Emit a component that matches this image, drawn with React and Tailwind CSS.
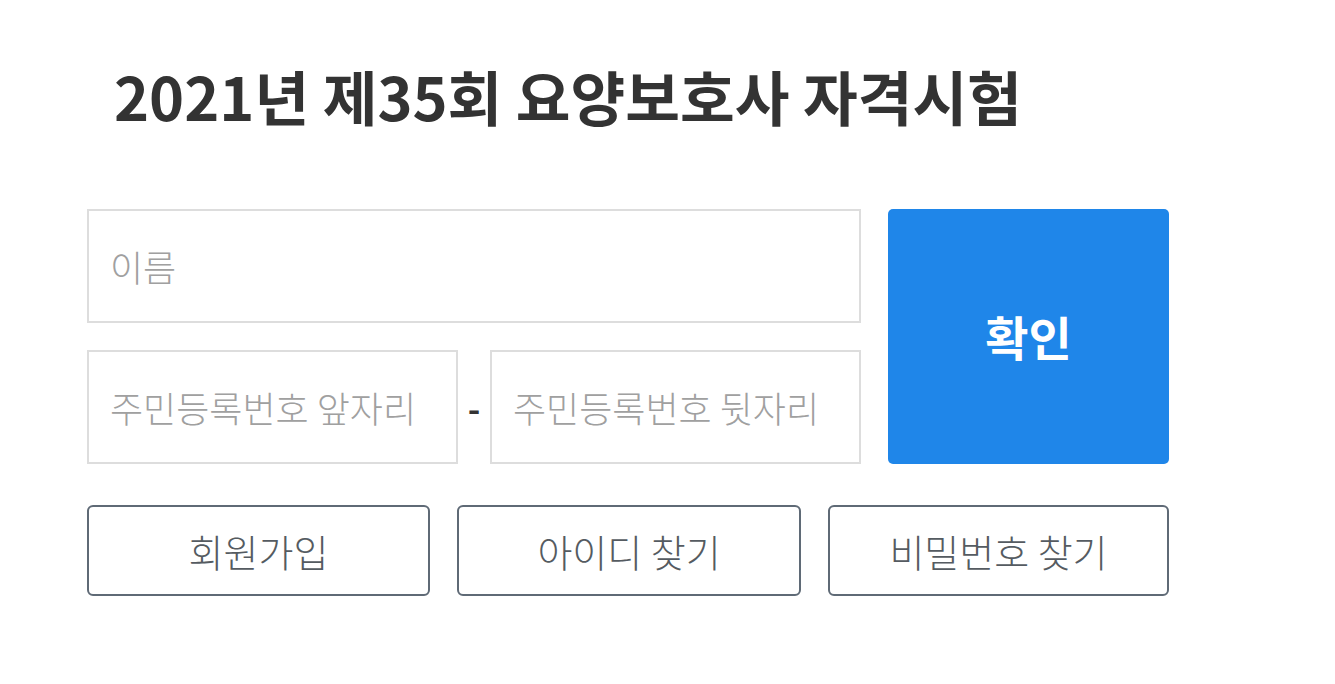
export default function App() {
  const font = { fontFamily: '"Noto Sans CJK KR", "Noto Sans", sans-serif' };

  return (
    <main className="min-h-screen bg-white" style={font}>
      <div className="pl-[87px] pt-[55px] w-[1169px]">
        <h1 className="pl-[27px] text-[59.5px] leading-[80px] font-bold text-[#333333]">
          2021년 제35회 요양보호사 자격시험
        </h1>

        <div className="mt-[74px] flex gap-[27px]">
          <div className="flex flex-col gap-[27px] w-[774px]">
            <input
              type="text"
              placeholder="이름"
              className="h-[114px] w-full border-2 border-[#dddddd] px-[21px] text-[36px] font-light text-[#333] placeholder:text-[#a0a0a0] outline-none"
            />
            <div className="flex items-center">
              <input
                type="text"
                placeholder="주민등록번호 앞자리"
                className="h-[114px] w-[371px] border-2 border-[#dddddd] px-[21px] text-[36px] font-light text-[#333] placeholder:text-[#a0a0a0] outline-none"
              />
              <span className="flex-1 text-center text-[34px] font-bold text-[#333]">-</span>
              <input
                type="text"
                placeholder="주민등록번호 뒷자리"
                className="h-[114px] w-[371px] border-2 border-[#dddddd] px-[21px] text-[36px] font-light text-[#333] placeholder:text-[#a0a0a0] outline-none"
              />
            </div>
          </div>
          <button className="w-[281px] h-[255px] rounded-[5px] bg-[#1f86e9] text-white text-[47px] font-bold">
            확인
          </button>
        </div>

        <div className="mt-[41px] flex gap-[27px]">
          <button className="w-[343px] h-[91px] rounded-[6px] border-2 border-[#5f6a76] text-[38px] font-light text-[#555b61]">
            회원가입
          </button>
          <button className="w-[344px] h-[91px] rounded-[6px] border-2 border-[#5f6a76] text-[38px] font-light text-[#555b61]">
            아이디 찾기
          </button>
          <button className="w-[341px] h-[91px] rounded-[6px] border-2 border-[#5f6a76] text-[38px] font-light text-[#555b61]">
            비밀번호 찾기
          </button>
        </div>
      </div>
    </main>
  );
}
